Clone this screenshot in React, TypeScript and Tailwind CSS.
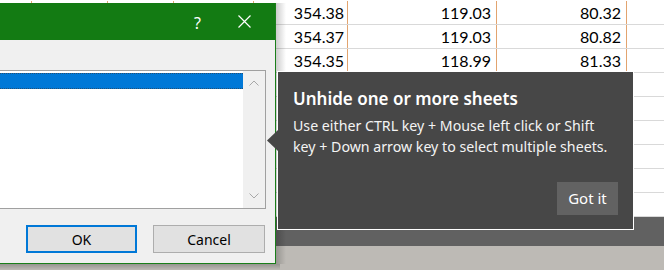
import React from 'react';

const cols = [32, 76, 66, 80, 94, 149, 130, 37];
const rows: (string | null)[][] = [
  ['354.38', '119.03', '80.32'],
  ['354.37', '119.03', '80.82'],
  ['354.35', '118.99', '81.33'],
  [], [], [], [], [], [],
];

const Sheet: React.FC = () => (
  <div className="h-[217px] bg-white pt-px overflow-hidden" style={{ fontFamily: 'Lato, "Liberation Sans", sans-serif' }}>
    {rows.map((r, i) => (
      <div key={i} className="flex h-6 border-b border-[#d9d9d9]">
        {cols.map((w, c) => {
          const v = c >= 4 && c <= 6 ? r[c - 4] : null;
          const orange = i < 3 && c < 7;
          return (
            <div
              key={c}
              className={`shrink-0 flex items-center justify-end text-[16px] text-black ${c === 4 ? 'pr-[3px]' : 'pr-[5px]'} ${orange ? 'border-r border-[#e2a46f]' : ''}`}
              style={{ width: w }}
            >
              {v}
            </div>
          );
        })}
      </div>
    ))}
  </div>
);

const Chevron: React.FC<{ down?: boolean }> = ({ down }) => (
  <svg width="10" height="6" viewBox="0 0 10 6" className={down ? 'rotate-180' : ''}>
    <path d="M0.5 5.5 L5 1 L9.5 5.5" fill="none" stroke="#a8a8a8" strokeWidth="1" />
  </svg>
);

const Dialog: React.FC = () => (
  <div className="absolute left-0 top-[3px] w-[276px] h-[261px] flex flex-col bg-[#f0f0f0] border-r border-b border-[#1a7f1a]" style={{ fontFamily: '"Noto Sans", "Open Sans", sans-serif' }}>
    <div className="h-[37px] shrink-0 bg-[#137b13] flex items-center justify-end text-white">
      <span className="text-[16px] leading-none mr-[37px] mt-[2px]">?</span>
      <svg width="13" height="13" viewBox="0 0 13 13" className="mr-[24px]">
        <path d="M0.5 0.5 L12.5 12.5 M12.5 0.5 L0.5 12.5" stroke="white" strokeWidth="1.2" />
      </svg>
    </div>
    <div className="flex-1 flex flex-col pt-[30px] pr-[9px]">
      <div className="h-[139px] flex border-t border-r border-b border-[#a0a0a0] bg-white">
        <div className="flex-1 pt-[2px]">
          <div className="h-[16px] bg-[#0078d7] border-t border-b border-dotted border-[#274f73]" />
        </div>
        <div className="w-[22px] bg-[#f0f0f0] flex flex-col items-center justify-between py-[9px]">
          <Chevron />
          <Chevron down />
        </div>
      </div>
      <div className="flex justify-end gap-4 mt-[16px] mr-px text-[14px] text-black">
        <button className="w-[111px] h-[28px] bg-[#e1e1e1] border-2 border-[#0078d7]">OK</button>
        <button className="w-[112px] h-[28px] bg-[#e1e1e1] border border-[#adadad]">Cancel</button>
      </div>
    </div>
  </div>
);

const Tooltip: React.FC = () => (
  <div className="absolute left-[277px] top-[71px] w-[357px] h-[159px] bg-[#474747] border border-white text-white flex flex-col" style={{ fontFamily: '"Noto Sans", "Open Sans", sans-serif' }}>
    <svg width="11" height="21" viewBox="0 0 11 21" className="absolute left-[-11px] top-[58px]">
      <path d="M11 0 L0 10.5 L11 21 Z" fill="#474747" />
    </svg>
    <div className="pl-[15px] pt-[15px]">
      <div className="text-[17px] font-semibold leading-[24px]">Unhide one or more sheets</div>
      <div className="text-[14.2px] leading-[21px] mt-[4px] text-[#f4f4f4]">
        Use either CTRL key + Mouse left click or Shift
        <br />
        key + Down arrow key to select multiple sheets.
      </div>
    </div>
    <div className="flex justify-end pr-[15px] mt-auto mb-[14px]">
      <button className="w-[61px] h-[33px] bg-[#626262] text-[15px]">Got it</button>
    </div>
  </div>
);

export default function App() {
  return (
    <div className="relative w-[664px] h-[270px] overflow-hidden bg-white">
      <div className="flex flex-col h-full">
        <Sheet />
        <div className="h-[29px] bg-[#616161]" />
        <div className="flex-1 bg-[#bdbab5]" />
      </div>
      <div className="absolute left-[276px] top-[3px] w-[10px] h-[261px] bg-linear-to-r from-black/20 to-transparent" />
      <div className="absolute left-0 top-[264px] w-[280px] h-[6px] bg-linear-to-b from-black/20 to-transparent" />
      <Dialog />
      <Tooltip />
    </div>
  );
}
